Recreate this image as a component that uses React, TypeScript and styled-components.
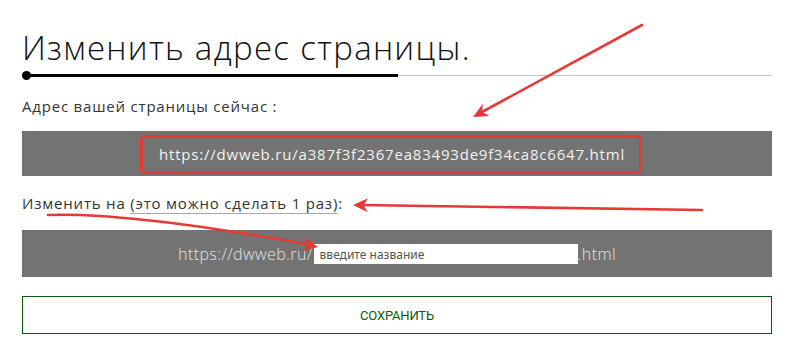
import React from "react";
import styled, { createGlobalStyle } from "styled-components";

const GlobalStyle = createGlobalStyle`
  html, body {
    margin: 0;
    padding: 0;
    background: #fff;
  }
  body {
    font-family: "Open Sans", "Liberation Sans", sans-serif;
    color: #222;
  }
`;

const Page = styled.div`
  position: relative;
  width: 796px;
  height: 358px;
  box-sizing: border-box;
  padding: 26px 24px 0 22px;
  overflow: hidden;
`;

const Title = styled.h1`
  margin: 0;
  font-family: "Open Sans", sans-serif;
  font-weight: 300;
  font-size: 33px;
  line-height: 44px;
  letter-spacing: 1.3px;
  color: #111;
`;

const Divider = styled.div`
  display: flex;
  align-items: center;
  height: 10px;
  margin: 0 0 16px 0;
`;

const Dot = styled.span`
  flex: 0 0 9px;
  height: 9px;
  border-radius: 50%;
  background: #000;
  margin-right: -4px;
`;

const Line = styled.span<{ $thick?: boolean }>`
  flex: ${(p) => (p.$thick ? "0 0 371px" : "1 1 auto")};
  height: ${(p) => (p.$thick ? "3px" : "1px")};
  background: ${(p) => (p.$thick ? "#000" : "#c4c4c4")};
`;

const Label = styled.div<{ $gap: number; $top?: number }>`
  font-size: 15px;
  line-height: 20px;
  letter-spacing: 0.8px;
  color: #333;
  margin-top: ${(p) => p.$top ?? 0}px;
  margin-bottom: ${(p) => p.$gap}px;
`;

const Dotted = styled.span`
  text-decoration: underline;
  text-decoration-color: #a8a8a8;
  text-decoration-thickness: 1px;
  text-underline-offset: 4px;
`;

const UrlBar = styled.div<{ $height: number }>`
  display: flex;
  align-items: center;
  justify-content: center;
  height: ${(p) => p.$height}px;
  background: #737373;
  color: #f2f2f2;
  font-size: 15px;
`;

const Highlight = styled.div`
  display: flex;
  align-items: center;
  justify-content: center;
  width: 502px;
  height: 39px;
  box-sizing: border-box;
  margin: 1px 12px 0 0;
  border: 3px solid #e53935;
  border-radius: 5px;
  padding-left: 2px;
  letter-spacing: 0.8px;
`;

const Prefix = styled.span`
  font-family: "Open Sans", sans-serif;
  font-weight: 300;
  font-size: 16px;
  color: #e4e4e4;
  letter-spacing: 0.4px;
`;

const NameInput = styled.input`
  width: 264px;
  height: 20px;
  box-sizing: border-box;
  margin: 1px 0 0 1px;
  border: none;
  outline: none;
  padding: 0 6px;
  background: #fff;
  font-family: "Noto Sans", "DejaVu Sans", sans-serif;
  font-size: 12px;
  color: #333;
  &::placeholder {
    color: #555;
  }
`;

const SaveButton = styled.button`
  display: block;
  width: 100%;
  height: 38px;
  margin-top: 19px;
  background: #fff;
  border: 1px solid #0b5a0b;
  color: #0b5a0b;
  font-family: "Roboto", sans-serif;
  font-size: 13px;
  letter-spacing: -0.2px;
  cursor: pointer;
`;

const Overlay = styled.svg`
  position: absolute;
  left: 0;
  top: 0;
  pointer-events: none;
`;

const RED = "#e53935";

function head(tx: number, ty: number, fx: number, fy: number, len = 15, half = 7) {
  const dx = tx - fx;
  const dy = ty - fy;
  const d = Math.hypot(dx, dy);
  const ux = dx / d;
  const uy = dy / d;
  const bx = tx - ux * len;
  const by = ty - uy * len;
  const nx = tx - ux * len * 0.7;
  const ny = ty - uy * len * 0.7;
  return `M${tx},${ty} L${bx - uy * half},${by + ux * half} L${nx},${ny} L${bx + uy * half},${by - ux * half} Z`;
}

const Arrows: React.FC = () => (
  <Overlay width="796" height="358" viewBox="0 0 796 358">
    <g stroke={RED} strokeWidth="2.6" strokeLinecap="round" fill="none">
      <line x1="642" y1="25" x2="482" y2="112" />
      <line x1="702" y1="210" x2="362" y2="205" />
      <path d="M48,215 Q128,212 306,244" />
    </g>
    <g fill={RED}>
      <path d={head(473, 117, 642, 25)} />
      <path d={head(353, 205, 702, 210)} />
      <path d={head(318, 247, 210, 228)} />
    </g>
  </Overlay>
);

const App: React.FC = () => {
  return (
    <>
      <GlobalStyle />
      <Page>
        <Title>Изменить адрес страницы.</Title>
        <Divider>
          <Dot />
          <Line $thick />
          <Line />
        </Divider>
        <Label $gap={15}>Адрес вашей страницы сейчас :</Label>
        <UrlBar $height={45}>
          <Highlight>https://dwweb.ru/a387f3f2367ea83493de9f34ca8c6647.html</Highlight>
        </UrlBar>
        <Label $gap={17} $top={17}>
          Изменить на <Dotted>(это можно сделать 1 раз)</Dotted>:
        </Label>
        <UrlBar $height={47}>
          <Prefix>https://dwweb.ru/</Prefix>
          <NameInput placeholder="введите название" />
          <Prefix>.html</Prefix>
        </UrlBar>
        <SaveButton>СОХРАНИТЬ</SaveButton>
      </Page>
      <Arrows />
    </>
  );
};

export default App;
